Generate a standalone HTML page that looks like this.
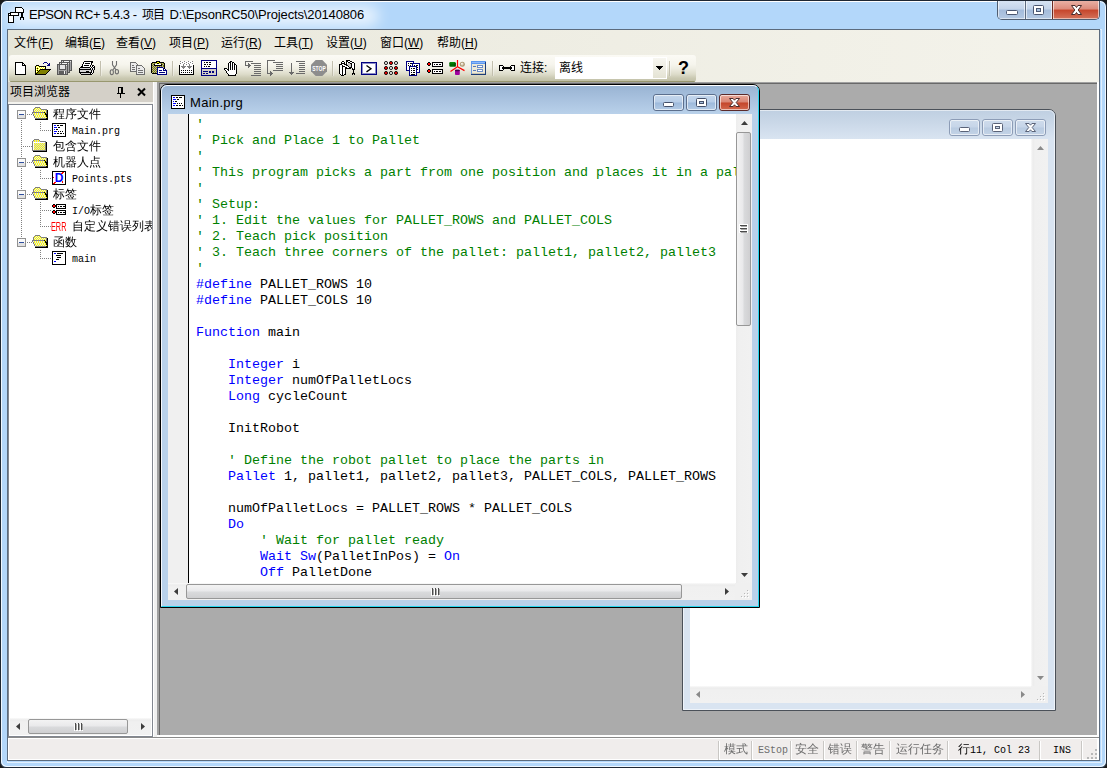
<!DOCTYPE html>
<html lang="zh-CN"><head><meta charset="utf-8"><title>EPSON RC+ 5.4.3</title>
<style>
html,body{margin:0;padding:0;}
body{width:1107px;height:768px;overflow:hidden;background:#1a1a1a;position:relative;font-family:"Liberation Sans","Noto Sans CJK SC",sans-serif;font-size:12px;color:#000;}
div,span,svg,pre{position:absolute;box-sizing:border-box;}
svg{overflow:visible;}
.px{shape-rendering:crispEdges;}
/* main frame */
#frame{left:0;top:0;width:1107px;height:768px;border:1px solid #1e2733;border-radius:7px 7px 6px 6px;background:#b3d7fa;overflow:hidden;}
#titlegrad{display:none;}
#titleglow{left:6px;top:5px;width:372px;height:20px;border-radius:10px;background:rgba(255,255,255,.7);filter:blur(7px);}
#frameinner{left:0;top:0;width:1105px;height:766px;border:1px solid rgba(255,255,255,.8);border-top-color:#fff;border-radius:6px;}
#frameinner2{left:6px;top:28px;width:1095px;height:734px;border:1px solid rgba(255,255,255,.6);}
#title{left:29px;top:7px;height:16px;line-height:16px;font-size:13px;white-space:nowrap;color:#000;letter-spacing:-.21px;}
#clientborder{left:7px;top:29px;width:1093px;height:732px;border:1px solid #5c6b7d;background:#fff;}
/* menu */
#menubar{left:8px;top:30px;width:1091px;height:52px;background:linear-gradient(90deg,#e6e6d9 0,#ecebe0 30%,#f4f3eb 100%);}
.mi{top:35px;height:16px;line-height:16px;font-size:12px;white-space:nowrap;}
.mi u{text-decoration:underline;text-underline-offset:1px;}
/* toolbar */
#toolbar{left:9px;top:55px;width:687px;height:27px;border-radius:3px;background:linear-gradient(180deg,#fbfaf5 0,#f6f5ed 35%,#eeede2 50%,#dddcca 71%,#c9c8b1 86%,#c2c1a8 96%,#c2c1a8 100%);}
#toolbarshadow{left:10px;top:81px;width:685px;height:1px;background:#98976f;border-radius:0 0 3px 3px;}
.sep{top:61px;width:1px;height:15px;background:#c2bfae;}
.sep i{position:absolute;left:1px;top:0;width:1px;height:15px;background:rgba(255,255,255,.35);}
.ic{top:60px;width:16px;height:16px;}
/* left panel */
#lp{left:8px;top:82px;width:145px;height:655px;background:#f4f3ee;}
#lphead{left:0;top:0;width:145px;height:20px;background:#d4d0c8;}
#lptitle{left:2px;top:2px;font-size:12px;line-height:16px;white-space:nowrap;}
#tree{left:0;top:22px;width:145px;height:633px;border:1px solid #828790;background:#fff;overflow:hidden;box-shadow:inset 0 0 0 1px #fff;}
.tl{margin-top:1px;font-family:"Liberation Mono","WenQuanYi Zen Hei","Noto Sans CJK SC",monospace;font-size:12px;line-height:16px;height:16px;white-space:nowrap;}
/* mdi */
#split{left:153px;top:82px;width:4px;height:655px;background:#f0f0f0;border-left:1px solid #fff;}
#mdiedge{left:157px;top:82px;width:942px;height:655px;background:#a0a0a0;border-right:2px solid #fff;border-bottom:2px solid #fff;}
#mdiedge2{left:159px;top:83px;width:938px;height:652px;background:#696969;}
#mdi{left:160px;top:84px;width:937px;height:651px;background:#ababab;overflow:hidden;}
/* status */
#status{left:8px;top:737px;width:1091px;height:22px;background:#f0edec;border-top:1px solid #8a8a8a;box-shadow:inset 0 1px 0 #fff,inset -2px 0 0 #fff,inset 1px 0 0 #fff;}
.ssep{top:3px;width:1px;height:19px;background:#c9c7c4;}
.ssep i{position:absolute;left:1px;top:0;width:1px;height:19px;background:#fff;}
.st{top:4px;height:16px;line-height:16px;font-size:12px;white-space:nowrap;font-family:"Liberation Mono","WenQuanYi Zen Hei","Noto Sans CJK SC",monospace;}
.st.dis{color:#6d6d6d;}
/* child windows */
.win{border-radius:7px 7px 0 0;}
.cbtn{border-radius:3px;}
#code{font-family:"Liberation Mono",monospace;font-size:13.333px;line-height:16px;white-space:pre;left:7px;top:3px;color:#000;margin:0;}
#code .c{font-weight:normal;color:#008000;}
#code .k{font-weight:normal;color:#0000ff;}
/* window 2 (inactive) */
#w2{left:522px;top:25px;width:374px;height:602px;border:1px solid #4b5159;border-radius:7px 7px 0 0;background:#d9e4f1;overflow:hidden;}
#w2 .tgrad{left:0;top:0;width:372px;height:29px;background:linear-gradient(180deg,#bfcfe1 0,#cad8e8 45%,#d9e4f1 100%);}
#w2 .hl{left:0;top:0;width:372px;height:600px;border:1px solid rgba(255,255,255,.55);border-radius:6px 6px 0 0;}
#w2 .client{left:7px;top:29px;width:358px;height:564px;background:#fff;}
.vsb{background:linear-gradient(90deg,#fafafa 0,#ececec 2px,#f0f0f0 4px,#f1f1f1 100%);width:17px;}
.hsb{background:linear-gradient(180deg,#fafafa 0,#ececec 2px,#f0f0f0 4px,#f1f1f1 100%);height:17px;}
.sbc{background:#f0f0f0;width:17px;height:17px;}
.cb{width:31px;height:17px;border:1px solid #7f8fa8;border-radius:3px;}
.cb i{position:absolute;left:0;top:0;right:0;bottom:0;border:1px solid rgba(255,255,255,.6);border-radius:2px;}
#w2 .cb{background:linear-gradient(180deg,#cfdcec 0,#c6d5e8 48%,#b9cbe1 52%,#c3d3e6 100%);border-color:#8c9cb6;}
/* window 1 (active) */
#w1{left:0;top:0;width:600px;height:524px;border:1px solid #000;border-radius:7px 7px 0 0;background:#b9d1ea;overflow:hidden;}
#w1 .tgrad{left:0;top:0;width:598px;height:29px;background:linear-gradient(180deg,#98b3d2 0,#a9c2df 50%,#b9d1ea 100%);}
#w1 .hl{left:0;top:0;width:598px;height:522px;border:1px solid #26d6ee;border-top-color:#fff;border-left-color:rgba(255,255,255,.85);border-radius:6px 6px 0 0;}
#w1 .client{left:7px;top:29px;width:584px;height:486px;background:#fff;overflow:hidden;}
#w1 .cb{background:linear-gradient(180deg,#c5d7ec 0,#b7cde8 48%,#9db9db 52%,#b4cbe6 100%);border-color:#5c6f8d;}
#w1 .cb.close{background:linear-gradient(180deg,#e9a99b 0,#d98472 48%,#c4452a 52%,#d2694f 100%);border-color:#5b2a2a;}
#w1 .wtitle{left:29px;top:10px;font-size:13px;letter-spacing:.3px;line-height:16px;white-space:nowrap;}
#margin{left:0;top:0;width:20px;height:469px;background:#f0f0f0;}
#mline{left:20px;top:0;width:1px;height:469px;background:#000;}
#codearea{left:21px;top:0;width:547px;height:469px;z-index:1;background:#fff;overflow:hidden;}
.thumbv{border:1px solid #979797;border-radius:2px;background:linear-gradient(90deg,#f3f3f3 0,#e9e9eb 45%,#d9dadc 55%,#cfcfd1 100%);}
.thumbh{border:1px solid #979797;border-radius:2px;background:linear-gradient(180deg,#f3f3f3 0,#e9e9eb 45%,#d9dadc 55%,#cfcfd1 100%);}
#connlbl{left:520px;top:60px;font-size:12px;line-height:16px;white-space:nowrap;}
#combo{left:555px;top:57px;width:112px;height:22px;background:#fff;}
#combotext{left:4px;top:3px;font-size:12px;line-height:16px;white-space:nowrap;}
#combobtn{left:98px;top:1px;width:13px;height:20px;background:linear-gradient(180deg,#f7f6f0 0,#e4e3d4 100%);}
#help{left:677px;top:57px;width:13px;height:22px;line-height:22px;font-size:18px;font-weight:bold;text-align:center;font-family:"Liberation Sans",sans-serif;}
.vd{width:1px;background:repeating-linear-gradient(180deg,#808080 0,#808080 1px,transparent 1px,transparent 2px);}
.hd{height:1px;background:repeating-linear-gradient(90deg,#808080 0,#808080 1px,transparent 1px,transparent 2px);}
.err{font-family:"Liberation Sans",sans-serif;font-size:13.500px;line-height:16px;margin-top:1px;color:#f00;transform:scaleX(.54);transform-origin:0 0;white-space:nowrap;}
.la{position:relative;font-size:10px;letter-spacing:0;}
#capbtns{left:997px;top:1px;width:103px;height:19px;border:1px solid #4f5d70;border-top:none;border-radius:0 0 5px 5px;overflow:hidden;}
.mb{top:0;height:18px;border-left:1px solid #5c6b80;background:linear-gradient(180deg,#d6e3f3 0,#c3d4ea 45%,#a4bcdb 50%,#b4c9e3 100%);box-shadow:inset 1px 0 0 rgba(255,255,255,.6),inset -1px 0 0 rgba(255,255,255,.6),inset 0 -1px 0 rgba(255,255,255,.5);}
.mb:first-child{border-left:none;}
.mclose{background:linear-gradient(180deg,#e9b0a4 0,#dc8b7b 45%,#c6452b 50%,#d4735b 100%);border-left-color:#6b2a22;}

</style></head>
<body>
<div id="frame">
  <div id="titlegrad"></div>
  <div id="titleglow"></div>
  <div id="frameinner"></div><div id="frameinner2"></div>
</div>
<div id="capbtns"><div class="mb" style="left:0;width:27px"><svg style="left:8px;top:9px" width="12" height="5" viewBox="0 0 12 5"><rect x=".5" y=".5" width="11" height="4" rx="1" fill="#fff" stroke="#4a5670"/></svg></div><div class="mb" style="left:27px;width:27px"><svg style="left:7px;top:4px" width="11" height="10" viewBox="0 0 11 10"><rect x=".5" y=".5" width="10" height="9" rx="1" fill="#fff" stroke="#4a5670"/><rect x="3.500" y="3.500" width="4" height="3" fill="#a9c1de" stroke="#4a5670"/></svg></div><div class="mb mclose" style="left:54px;width:47px"><svg style="left:18px;top:4px" width="11" height="10" viewBox="0 0 11 10"><path d="M.5 .5h3.600l1.400 2 1.400-2h3.600l-3.300 4.500 3.300 4.500h-3.600l-1.400-2-1.400 2h-3.600l3.300-4.500z" fill="#fff" stroke="#4a2c2c" stroke-linejoin="round"/></svg></div></div>
<svg class="px" style="left:8px;top:7px" width="16" height="16" viewBox="0 0 16 16"><path fill="#000" d="M7 0h7v1h-7zM7 1h1v1h-1zM14 1h1v1h-1zM7 2h1v1h-1zM15 2h1v1h-1zM7 3h1v1h-1zM15 3h1v1h-1zM7 4h1v1h-1zM15 4h1v1h-1zM2 5h14v1h-14zM0 6h3v1h-3zM10 6h1v1h-1zM13 6h2v1h-2zM0 7h1v1h-1zM2 7h1v1h-1zM10 7h1v1h-1zM13 7h2v1h-2zM0 8h11v1h-11zM13 8h2v1h-2zM0 9h1v1h-1zM5 9h1v1h-1zM13 9h2v1h-2zM0 10h1v1h-1zM5 10h1v1h-1zM12 10h4v1h-4zM0 11h1v1h-1zM5 11h1v1h-1zM12 11h1v1h-1zM15 11h1v1h-1zM0 12h1v1h-1zM5 12h1v1h-1zM12 12h1v1h-1zM15 12h1v1h-1zM0 13h1v1h-1zM5 13h1v1h-1zM0 14h1v1h-1zM5 14h1v1h-1zM0 15h6v1h-6z"/><path fill="#fff" d="M8 1h6v1h-6zM8 2h7v1h-7zM8 3h7v1h-7zM8 4h7v1h-7zM3 6h7v1h-7zM1 7h1v1h-1zM3 7h7v1h-7zM1 9h4v1h-4zM1 10h4v1h-4zM1 11h4v1h-4zM1 12h4v1h-4zM1 13h4v1h-4zM1 14h4v1h-4z"/></svg>
<div id="title"><span style="left:0;letter-spacing:-.5px">EPSON RC+ 5.4.3 -</span><span style="left:113px;font-size:12px;letter-spacing:-.9px">项目</span><span style="left:140.500px;letter-spacing:-.14px">D:\EpsonRC50\Projects\20140806</span></div>
<div id="clientborder"></div>
<div id="menubar"></div>
<div class="mi" style="left:14px">文件(<u>F</u>)</div>
<div class="mi" style="left:65px">编辑(<u>E</u>)</div>
<div class="mi" style="left:116px">查看(<u>V</u>)</div>
<div class="mi" style="left:169px">项目(<u>P</u>)</div>
<div class="mi" style="left:221px">运行(<u>R</u>)</div>
<div class="mi" style="left:274px">工具(<u>T</u>)</div>
<div class="mi" style="left:326px">设置(<u>U</u>)</div>
<div class="mi" style="left:380px">窗口(<u>W</u>)</div>
<div class="mi" style="left:437px">帮助(<u>H</u>)</div>
<div id="toolbar"></div>
<div id="toolbarshadow"></div>
<svg class="ic px" style="left:13px" viewBox="0 0 16 16"><path d="M2.500 2.500h7l3 3v9h-10z" fill="#fff" stroke="#000"/><path d="M9.500 2.500v3h3" fill="none" stroke="#000"/></svg><svg class="ic px" style="left:35px" width="16" height="16" viewBox="0 0 16 16"><path fill="#000080" d="M9 2h3v1h-3zM8 3h1v1h-1zM12 3h1v1h-1zM14 3h1v1h-1zM13 4h2v1h-2zM12 5h3v1h-3z"/><path fill="#000" d="M1 5h3v1h-3zM0 6h1v1h-1zM4 6h7v1h-7zM0 7h1v1h-1zM10 7h1v1h-1zM0 8h1v1h-1zM2 8h1v1h-1zM10 8h1v1h-1zM0 9h1v1h-1zM5 9h11v1h-11zM0 10h1v1h-1zM2 10h1v1h-1zM4 10h1v1h-1zM14 10h1v1h-1zM0 11h1v1h-1zM3 11h1v1h-1zM13 11h1v1h-1zM0 12h1v1h-1zM2 12h1v1h-1zM12 12h1v1h-1zM0 13h2v1h-2zM11 13h1v1h-1zM0 14h11v1h-11z"/><path fill="#ffff00" d="M1 6h1v1h-1zM3 6h1v1h-1zM2 7h1v1h-1zM4 7h1v1h-1zM6 7h1v1h-1zM8 7h1v1h-1zM1 8h1v1h-1zM3 8h1v1h-1zM5 8h1v1h-1zM7 8h1v1h-1zM9 8h1v1h-1zM2 9h1v1h-1zM4 9h1v1h-1zM1 10h1v1h-1zM3 10h1v1h-1zM2 11h1v1h-1zM1 12h1v1h-1z"/><path fill="#fff" d="M2 6h1v1h-1zM1 7h1v1h-1zM3 7h1v1h-1zM5 7h1v1h-1zM7 7h1v1h-1zM9 7h1v1h-1zM4 8h1v1h-1zM6 8h1v1h-1zM8 8h1v1h-1zM1 9h1v1h-1zM3 9h1v1h-1zM1 11h1v1h-1z"/><path fill="#808000" d="M5 10h9v1h-9zM4 11h9v1h-9zM3 12h9v1h-9zM2 13h9v1h-9z"/></svg><svg class="ic px" style="left:57px" width="16" height="16" viewBox="0 0 16 16"><path fill="#585858" d="M4 0h11v1h-11zM4 1h1v1h-1zM6 1h1v1h-1zM12 1h1v1h-1zM14 1h1v1h-1zM2 2h11v1h-11zM14 2h1v1h-1zM2 3h1v1h-1zM4 3h1v1h-1zM10 3h1v1h-1zM12 3h1v1h-1zM14 3h1v1h-1zM0 4h11v1h-11zM12 4h1v1h-1zM14 4h1v1h-1zM0 5h1v1h-1zM2 5h1v1h-1zM8 5h1v1h-1zM10 5h1v1h-1zM12 5h1v1h-1zM14 5h1v1h-1zM0 6h1v1h-1zM2 6h1v1h-1zM8 6h1v1h-1zM10 6h1v1h-1zM12 6h1v1h-1zM14 6h1v1h-1zM0 7h1v1h-1zM2 7h1v1h-1zM8 7h1v1h-1zM10 7h1v1h-1zM12 7h1v1h-1zM14 7h1v1h-1zM0 8h1v1h-1zM2 8h1v1h-1zM8 8h1v1h-1zM10 8h1v1h-1zM12 8h1v1h-1zM14 8h1v1h-1zM0 9h1v1h-1zM2 9h7v1h-7zM10 9h1v1h-1zM12 9h1v1h-1zM14 9h1v1h-1zM0 10h1v1h-1zM10 10h1v1h-1zM12 10h3v1h-3zM0 11h1v1h-1zM2 11h1v1h-1zM8 11h1v1h-1zM10 11h1v1h-1zM12 11h1v1h-1zM0 12h1v1h-1zM2 12h1v1h-1zM8 12h1v1h-1zM10 12h3v1h-3zM0 13h1v1h-1zM2 13h1v1h-1zM8 13h1v1h-1zM10 13h1v1h-1zM0 14h11v1h-11z"/><path fill="#e0e0e0" d="M5 1h1v1h-1zM13 1h1v1h-1zM3 3h1v1h-1zM11 3h1v1h-1zM9 5h1v1h-1z"/><path fill="#f4f4f4" d="M7 1h5v1h-5zM5 3h5v1h-5zM7 11h1v1h-1zM7 12h1v1h-1zM7 13h1v1h-1z"/><path fill="#a4a4a4" d="M13 2h1v1h-1zM13 3h1v1h-1zM11 4h1v1h-1zM13 4h1v1h-1zM1 5h1v1h-1zM11 5h1v1h-1zM13 5h1v1h-1zM1 6h1v1h-1zM9 6h1v1h-1zM11 6h1v1h-1zM13 6h1v1h-1zM1 7h1v1h-1zM9 7h1v1h-1zM11 7h1v1h-1zM13 7h1v1h-1zM1 8h1v1h-1zM9 8h1v1h-1zM11 8h1v1h-1zM13 8h1v1h-1zM1 9h1v1h-1zM9 9h1v1h-1zM11 9h1v1h-1zM13 9h1v1h-1zM1 10h9v1h-9zM11 10h1v1h-1zM1 11h1v1h-1zM9 11h1v1h-1zM11 11h1v1h-1zM1 12h1v1h-1zM9 12h1v1h-1zM1 13h1v1h-1zM9 13h1v1h-1z"/><path fill="#e6e6e6" d="M3 5h5v1h-5zM3 6h5v1h-5zM3 7h5v1h-5zM3 8h5v1h-5z"/><path fill="#5e5e5e" d="M3 11h4v1h-4zM3 12h4v1h-4zM3 13h4v1h-4z"/></svg><svg class="ic px" style="left:79px" width="16" height="16" viewBox="0 0 16 16"><path fill="#000" d="M5 1h9v1h-9zM4 2h1v1h-1zM12 2h2v1h-2zM4 3h1v1h-1zM6 3h5v1h-5zM12 3h1v1h-1zM3 4h1v1h-1zM12 4h1v1h-1zM3 5h1v1h-1zM5 5h5v1h-5zM11 5h1v1h-1zM13 5h2v1h-2zM2 6h2v1h-2zM11 6h1v1h-1zM13 6h1v1h-1zM15 6h1v1h-1zM1 7h10v1h-10zM12 7h1v1h-1zM14 7h2v1h-2zM0 8h1v1h-1zM11 8h1v1h-1zM13 8h1v1h-1zM15 8h1v1h-1zM0 9h12v1h-12zM13 9h1v1h-1zM15 9h1v1h-1zM0 10h1v1h-1zM12 10h1v1h-1zM14 10h1v1h-1zM0 11h1v1h-1zM7 11h3v1h-3zM12 11h1v1h-1zM14 11h1v1h-1zM0 12h13v1h-13zM14 12h1v1h-1zM1 13h1v1h-1zM11 13h1v1h-1zM13 13h1v1h-1zM2 14h11v1h-11z"/><path fill="#fff" d="M5 2h7v1h-7zM5 3h1v1h-1zM11 3h1v1h-1zM4 4h8v1h-8zM4 5h1v1h-1zM10 5h1v1h-1zM4 6h7v1h-7zM12 6h1v1h-1zM14 6h1v1h-1zM11 7h1v1h-1zM13 7h1v1h-1zM12 8h1v1h-1zM14 8h1v1h-1zM13 11h1v1h-1zM13 12h1v1h-1zM12 13h1v1h-1z"/><path fill="#d4d4d4" d="M1 8h10v1h-10zM12 9h1v1h-1zM14 9h1v1h-1zM1 10h11v1h-11zM13 10h1v1h-1zM1 11h6v1h-6zM10 11h2v1h-2zM2 13h9v1h-9z"/></svg>
<div class="sep" style="left:100px"><i></i></div>
<svg class="ic" style="left:107px" viewBox="0 0 16 16" fill="none" stroke="#6e6e6e" stroke-width="1.100"><path d="M5.500 1v3.800l3.600 5.200M9.500 1v3.800l-3.600 5.200"/><ellipse cx="4.800" cy="12.200" rx="1.600" ry="2.400"/><ellipse cx="9.900" cy="11.700" rx="1.600" ry="2.200"/></svg><svg class="ic px" style="left:129px" viewBox="0 0 16 16"><g fill="#ebebeb" stroke="#6e6e6e"><path d="M1.500 2.500h5l2 2v7h-7z"/><path d="M7.500 5.500h5l3 3v6h-8z"/></g><path d="M3 5h2M3 7h3M3 9h3M9 8h2M9 10h5M9 12h5" stroke="#6e6e6e" transform="translate(0,.5)"/></svg><svg class="ic px" style="left:151px" width="16" height="16" viewBox="0 0 16 16"><path fill="#000" d="M5 1h4v1h-4zM1 2h5v1h-5zM8 2h5v1h-5zM0 3h1v1h-1zM6 3h2v1h-2zM13 3h1v1h-1zM0 4h1v1h-1zM3 4h1v1h-1zM10 4h1v1h-1zM13 4h1v1h-1zM0 5h1v1h-1zM3 5h8v1h-8zM13 5h1v1h-1zM0 6h1v1h-1zM13 6h1v1h-1zM0 7h1v1h-1zM13 7h1v1h-1zM0 8h1v1h-1zM13 8h1v1h-1zM0 9h1v1h-1zM0 10h1v1h-1zM0 11h1v1h-1zM0 12h1v1h-1zM1 13h5v1h-5z"/><path fill="#ffff00" d="M6 2h2v1h-2zM5 3h1v1h-1zM8 3h1v1h-1z"/><path fill="#808000" d="M1 3h1v1h-1zM3 3h1v1h-1zM10 3h1v1h-1zM12 3h1v1h-1zM2 4h1v1h-1zM11 4h1v1h-1zM1 5h1v1h-1zM12 5h1v1h-1zM2 6h1v1h-1zM4 6h1v1h-1zM6 6h1v1h-1zM8 6h1v1h-1zM10 6h1v1h-1zM12 6h1v1h-1zM1 7h1v1h-1zM3 7h1v1h-1zM5 7h1v1h-1zM2 8h1v1h-1zM4 8h1v1h-1zM1 9h1v1h-1zM3 9h1v1h-1zM5 9h1v1h-1zM2 10h1v1h-1zM4 10h1v1h-1zM1 11h1v1h-1zM3 11h1v1h-1zM5 11h1v1h-1zM2 12h1v1h-1zM4 12h1v1h-1z"/><path fill="#b0b0a0" d="M2 3h1v1h-1zM4 3h1v1h-1zM9 3h1v1h-1zM11 3h1v1h-1zM1 4h1v1h-1zM12 4h1v1h-1zM2 5h1v1h-1zM11 5h1v1h-1zM1 6h1v1h-1zM3 6h1v1h-1zM5 6h1v1h-1zM7 6h1v1h-1zM9 6h1v1h-1zM11 6h1v1h-1zM2 7h1v1h-1zM4 7h1v1h-1zM12 7h1v1h-1zM1 8h1v1h-1zM3 8h1v1h-1zM5 8h1v1h-1zM2 9h1v1h-1zM4 9h1v1h-1zM1 10h1v1h-1zM3 10h1v1h-1zM5 10h1v1h-1zM2 11h1v1h-1zM4 11h1v1h-1zM1 12h1v1h-1zM3 12h1v1h-1zM5 12h1v1h-1z"/><path fill="#fff" d="M4 4h6v1h-6zM7 8h5v1h-5zM7 9h5v1h-5zM13 9h1v1h-1zM7 10h1v1h-1zM11 10h1v1h-1zM7 11h8v1h-8zM7 12h1v1h-1zM14 12h1v1h-1zM7 13h8v1h-8z"/><path fill="#000080" d="M6 7h6v1h-6zM6 8h1v1h-1zM12 8h1v1h-1zM6 9h1v1h-1zM12 9h1v1h-1zM14 9h1v1h-1zM6 10h1v1h-1zM8 10h3v1h-3zM12 10h4v1h-4zM6 11h1v1h-1zM15 11h1v1h-1zM6 12h1v1h-1zM8 12h6v1h-6zM15 12h1v1h-1zM6 13h1v1h-1zM15 13h1v1h-1zM6 14h10v1h-10z"/></svg>
<div class="sep" style="left:172px"><i></i></div>
<svg class="ic px" style="left:179px" width="16" height="16" viewBox="0 0 16 16"><path fill="#808080" d="M1 1h1v1h-1zM5 1h1v1h-1zM9 1h1v1h-1zM13 1h1v1h-1zM3 2h1v1h-1zM7 2h1v1h-1zM11 2h1v1h-1zM1 3h1v1h-1zM5 3h1v1h-1zM9 3h1v1h-1zM13 3h1v1h-1zM4 4h1v1h-1zM7 4h1v1h-1zM10 4h1v1h-1zM4 5h1v1h-1zM10 5h1v1h-1zM2 6h5v1h-5zM8 6h5v1h-5zM3 7h3v1h-3zM9 7h3v1h-3zM4 8h1v1h-1zM10 8h1v1h-1z"/><path fill="#fff" d="M2 1h3v1h-3zM6 1h3v1h-3zM10 1h3v1h-3zM1 2h2v1h-2zM4 2h3v1h-3zM8 2h3v1h-3zM12 2h2v1h-2zM2 3h3v1h-3zM6 3h3v1h-3zM10 3h3v1h-3zM1 4h3v1h-3zM5 4h2v1h-2zM8 4h2v1h-2zM11 4h3v1h-3zM1 5h3v1h-3zM5 5h5v1h-5zM11 5h3v1h-3zM1 6h1v1h-1zM7 6h1v1h-1zM13 6h1v1h-1zM1 7h2v1h-2zM6 7h3v1h-3zM12 7h2v1h-2zM1 8h3v1h-3zM5 8h5v1h-5zM11 8h3v1h-3zM1 9h13v1h-13zM1 10h1v1h-1zM3 10h1v1h-1zM5 10h1v1h-1zM7 10h1v1h-1zM9 10h1v1h-1zM11 10h1v1h-1zM13 10h1v1h-1zM1 11h13v1h-13zM1 12h1v1h-1zM3 12h1v1h-1zM5 12h1v1h-1zM7 12h1v1h-1zM9 12h1v1h-1zM11 12h1v1h-1zM13 12h1v1h-1zM1 13h13v1h-13z"/><path fill="#000" d="M0 5h1v1h-1zM14 5h1v1h-1zM0 6h1v1h-1zM14 6h1v1h-1zM0 7h1v1h-1zM14 7h1v1h-1zM0 8h1v1h-1zM14 8h1v1h-1zM0 9h1v1h-1zM14 9h1v1h-1zM0 10h1v1h-1zM2 10h1v1h-1zM4 10h1v1h-1zM6 10h1v1h-1zM8 10h1v1h-1zM10 10h1v1h-1zM12 10h1v1h-1zM14 10h1v1h-1zM0 11h1v1h-1zM14 11h1v1h-1zM0 12h1v1h-1zM2 12h1v1h-1zM4 12h1v1h-1zM6 12h1v1h-1zM8 12h1v1h-1zM10 12h1v1h-1zM12 12h1v1h-1zM14 12h1v1h-1zM0 13h1v1h-1zM14 13h1v1h-1zM0 14h15v1h-15z"/></svg><svg class="ic px" style="left:201px" width="16" height="16" viewBox="0 0 16 16"><path fill="#000080" d="M0 0h16v1h-16zM0 1h1v1h-1zM15 1h1v1h-1zM0 2h1v1h-1zM15 2h1v1h-1zM0 3h1v1h-1zM15 3h1v1h-1zM0 4h1v1h-1zM15 4h1v1h-1zM0 5h1v1h-1zM15 5h1v1h-1zM0 6h1v1h-1zM15 6h1v1h-1zM0 7h1v1h-1zM15 7h1v1h-1zM0 8h16v1h-16zM0 9h1v1h-1zM15 9h1v1h-1zM0 10h1v1h-1zM15 10h1v1h-1zM0 11h1v1h-1zM2 11h5v1h-5zM8 11h2v1h-2zM11 11h2v1h-2zM15 11h1v1h-1zM0 12h1v1h-1zM8 12h2v1h-2zM11 12h2v1h-2zM15 12h1v1h-1zM0 13h1v1h-1zM2 13h2v1h-2zM5 13h2v1h-2zM15 13h1v1h-1zM0 14h1v1h-1zM15 14h1v1h-1zM0 15h16v1h-16z"/><path fill="#fff" d="M1 1h14v1h-14zM1 2h2v1h-2zM4 2h1v1h-1zM7 2h1v1h-1zM10 2h5v1h-5zM1 3h14v1h-14zM1 4h2v1h-2zM5 4h1v1h-1zM7 4h1v1h-1zM10 4h5v1h-5zM1 5h14v1h-14zM1 6h2v1h-2zM4 6h1v1h-1zM6 6h1v1h-1zM9 6h6v1h-6zM1 7h14v1h-14z"/><path fill="#000" d="M3 2h1v1h-1zM5 2h2v1h-2zM8 2h2v1h-2zM3 4h2v1h-2zM6 4h1v1h-1zM8 4h2v1h-2zM3 6h1v1h-1zM5 6h1v1h-1zM7 6h2v1h-2z"/><path fill="#d4d0c8" d="M1 9h14v1h-14zM1 10h14v1h-14zM1 11h1v1h-1zM7 11h1v1h-1zM10 11h1v1h-1zM13 11h2v1h-2zM1 12h7v1h-7zM10 12h1v1h-1zM13 12h2v1h-2zM1 13h1v1h-1zM4 13h1v1h-1zM7 13h8v1h-8zM1 14h14v1h-14z"/></svg><svg class="ic px" style="left:223px" width="16" height="16" viewBox="0 0 16 16"><path fill="#000" d="M7 1h2v1h-2zM6 2h2v1h-2zM9 2h2v1h-2zM5 3h1v1h-1zM7 3h1v1h-1zM9 3h1v1h-1zM11 3h1v1h-1zM5 4h1v1h-1zM7 4h1v1h-1zM9 4h1v1h-1zM11 4h2v1h-2zM5 5h1v1h-1zM7 5h1v1h-1zM9 5h1v1h-1zM11 5h1v1h-1zM13 5h1v1h-1zM5 6h1v1h-1zM7 6h1v1h-1zM9 6h1v1h-1zM11 6h1v1h-1zM13 6h1v1h-1zM5 7h1v1h-1zM7 7h1v1h-1zM9 7h1v1h-1zM11 7h1v1h-1zM13 7h1v1h-1zM1 8h3v1h-3zM5 8h1v1h-1zM7 8h1v1h-1zM9 8h1v1h-1zM11 8h1v1h-1zM13 8h1v1h-1zM1 9h1v1h-1zM4 9h2v1h-2zM7 9h1v1h-1zM9 9h1v1h-1zM11 9h1v1h-1zM13 9h1v1h-1zM2 10h1v1h-1zM5 10h1v1h-1zM13 10h1v1h-1zM3 11h1v1h-1zM13 11h1v1h-1zM3 12h1v1h-1zM13 12h1v1h-1zM4 13h1v1h-1zM13 13h1v1h-1zM5 14h1v1h-1zM12 14h1v1h-1zM5 15h8v1h-8z"/><path fill="#fff" d="M8 2h1v1h-1zM6 3h1v1h-1zM8 3h1v1h-1zM10 3h1v1h-1zM6 4h1v1h-1zM8 4h1v1h-1zM10 4h1v1h-1zM6 5h1v1h-1zM8 5h1v1h-1zM10 5h1v1h-1zM12 5h1v1h-1zM6 6h1v1h-1zM8 6h1v1h-1zM10 6h1v1h-1zM12 6h1v1h-1zM6 7h1v1h-1zM8 7h1v1h-1zM10 7h1v1h-1zM12 7h1v1h-1zM6 8h1v1h-1zM8 8h1v1h-1zM10 8h1v1h-1zM12 8h1v1h-1zM2 9h2v1h-2zM6 9h1v1h-1zM8 9h1v1h-1zM10 9h1v1h-1zM12 9h1v1h-1zM3 10h2v1h-2zM6 10h7v1h-7zM4 11h9v1h-9zM4 12h9v1h-9zM5 13h8v1h-8zM6 14h6v1h-6z"/></svg><svg class="ic px" style="left:245px" width="16" height="16" viewBox="0 0 16 16"><path fill="#6a6a6a" d="M0 1h8v1h-8zM0 2h1v1h-1zM0 3h1v1h-1zM3 3h1v1h-1zM6 3h10v1h-10zM0 4h1v1h-1zM3 4h2v1h-2zM0 5h6v1h-6zM9 5h7v1h-7zM3 6h2v1h-2zM3 7h1v1h-1zM9 7h7v1h-7zM9 9h7v1h-7zM9 11h7v1h-7zM9 13h7v1h-7zM6 15h10v1h-10z"/></svg><svg class="ic px" style="left:267px" width="16" height="16" viewBox="0 0 16 16"><path fill="#6a6a6a" d="M0 0h8v1h-8zM0 1h1v1h-1zM0 2h1v1h-1zM6 2h10v1h-10zM0 3h1v1h-1zM0 4h1v1h-1zM9 4h7v1h-7zM0 5h1v1h-1zM0 6h1v1h-1zM9 6h7v1h-7zM0 7h1v1h-1zM0 8h1v1h-1zM9 8h7v1h-7zM0 9h1v1h-1zM0 10h1v1h-1zM6 10h10v1h-10zM0 11h1v1h-1zM3 11h1v1h-1zM0 12h1v1h-1zM3 12h2v1h-2zM0 13h6v1h-6zM3 14h2v1h-2zM3 15h1v1h-1z"/></svg><svg class="ic px" style="left:289px" width="16" height="16" viewBox="0 0 16 16"><path fill="#6a6a6a" d="M7 1h9v1h-9zM2 3h1v1h-1zM10 3h6v1h-6zM2 4h1v1h-1zM2 5h1v1h-1zM10 5h6v1h-6zM2 6h1v1h-1zM2 7h1v1h-1zM10 7h6v1h-6zM2 8h1v1h-1zM2 9h1v1h-1zM10 9h6v1h-6zM2 10h1v1h-1zM2 11h1v1h-1zM10 11h6v1h-6zM0 12h5v1h-5zM1 13h3v1h-3zM7 13h9v1h-9zM2 14h1v1h-1z"/></svg><svg class="ic" style="left:311px" viewBox="0 0 16 16"><path d="M4.700 0h6.600L16 4.700v6.600L11.300 16H4.700L0 11.300V4.700z" fill="#8d8d8d"/><text x="8" y="10.600" text-anchor="middle" font-family="Liberation Sans,sans-serif" font-weight="bold" font-size="7" fill="#fff" textLength="13.500" lengthAdjust="spacingAndGlyphs">STOP</text></svg>
<div class="sep" style="left:332px"><i></i></div>
<svg class="ic px" style="left:339px" width="16" height="16" viewBox="0 0 16 16"><path fill="#000" d="M7 0h4v1h-4zM3 1h2v1h-2zM7 1h2v1h-2zM11 1h2v1h-2zM2 2h1v1h-1zM5 2h1v1h-1zM7 2h1v1h-1zM9 2h2v1h-2zM13 2h2v1h-2zM2 3h4v1h-4zM7 3h1v1h-1zM11 3h2v1h-2zM15 3h1v1h-1zM0 4h3v1h-3zM5 4h3v1h-3zM12 4h1v1h-1zM15 4h1v1h-1zM0 5h1v1h-1zM3 5h1v1h-1zM7 5h2v1h-2zM12 5h1v1h-1zM15 5h1v1h-1zM0 6h1v1h-1zM3 6h3v1h-3zM9 6h1v1h-1zM12 6h1v1h-1zM15 6h1v1h-1zM0 7h1v1h-1zM3 7h1v1h-1zM6 7h2v1h-2zM10 7h3v1h-3zM15 7h1v1h-1zM0 8h1v1h-1zM3 8h1v1h-1zM6 8h6v1h-6zM13 8h1v1h-1zM15 8h1v1h-1zM0 9h1v1h-1zM3 9h1v1h-1zM6 9h1v1h-1zM13 9h3v1h-3zM0 10h1v1h-1zM3 10h1v1h-1zM6 10h1v1h-1zM14 10h1v1h-1zM0 11h1v1h-1zM3 11h1v1h-1zM6 11h1v1h-1zM14 11h1v1h-1zM0 12h1v1h-1zM3 12h1v1h-1zM6 12h1v1h-1zM14 12h1v1h-1zM0 13h1v1h-1zM3 13h1v1h-1zM6 13h1v1h-1zM13 13h3v1h-3zM1 14h1v1h-1zM3 14h1v1h-1zM5 14h2v1h-2zM13 14h1v1h-1zM15 14h1v1h-1zM2 15h3v1h-3z"/><path fill="#fff" d="M9 1h2v1h-2zM3 2h2v1h-2zM8 2h1v1h-1zM11 2h2v1h-2zM8 3h1v1h-1zM13 3h2v1h-2zM3 4h2v1h-2zM13 4h2v1h-2zM1 5h2v1h-2zM4 5h3v1h-3zM13 5h2v1h-2zM1 6h2v1h-2zM6 6h3v1h-3zM13 6h2v1h-2zM1 7h2v1h-2zM4 7h2v1h-2zM8 7h2v1h-2zM13 7h2v1h-2zM1 8h2v1h-2zM4 8h2v1h-2zM14 8h1v1h-1zM1 9h2v1h-2zM4 9h2v1h-2zM1 10h2v1h-2zM4 10h2v1h-2zM1 11h2v1h-2zM4 11h2v1h-2zM1 12h2v1h-2zM4 12h2v1h-2zM1 13h2v1h-2zM4 13h2v1h-2zM2 14h1v1h-1zM4 14h1v1h-1z"/><path fill="#c8c8c8" d="M9 3h2v1h-2zM8 4h4v1h-4zM9 5h3v1h-3zM10 6h2v1h-2z"/></svg><svg class="ic px" style="left:361px" viewBox="0 0 16 16"><rect x=".5" y="2.500" width="15" height="12" fill="#fff" stroke="#000080" stroke-width="1"/><rect x="1.500" y="3.500" width="13" height="10" fill="none" stroke="#000080" stroke-width="1" opacity=".45"/><path d="M5.500 5.500l4.500 3.200-4.500 3.200" fill="none" stroke="#000" stroke-width="1.300" shape-rendering="auto"/></svg><svg class="ic" style="left:383px" viewBox="0 0 16 16"><g fill="#fff" stroke="#000" stroke-width=".9"><circle cx="3" cy="3" r="1.550"/><circle cx="8" cy="8" r="1.550"/><circle cx="13" cy="3" r="1.550"/><circle cx="8" cy="13" r="1.550"/></g><g fill="#f00" stroke="#000" stroke-width=".9"><circle cx="8" cy="3" r="1.550"/><circle cx="3" cy="8" r="1.550"/><circle cx="13" cy="8" r="1.550"/><circle cx="3" cy="13" r="1.550"/><circle cx="13" cy="13" r="1.550"/></g></svg><svg class="ic px" style="left:405px" viewBox="0 0 16 16"><g fill="#fff" stroke="#000080"><rect x="1.500" y="1.500" width="7" height="9"/><rect x="7.500" y="3.500" width="7" height="9"/><rect x="4.500" y="6.500" width="7" height="9"/></g><path d="M3 3h1M5 3h2M3 5h1M5 5h1M9 5h1M11 5h2M12 7h1M12 9h1M6 8h1M8 8h2M6 10h1M8 10h2M6 12h1M8 12h2M6 14h4" stroke="#000" transform="translate(0,.5)"/></svg><svg class="ic px" style="left:427px" viewBox="0 0 16 16"><g fill="#000"><rect x="1" y="2" width="2" height="4"/><rect x="0" y="3" width="4" height="2"/><rect x="1" y="9" width="2" height="4"/><rect x="0" y="10" width="4" height="2"/></g><g fill="#f00"><rect x="1" y="3" width="2" height="2"/><rect x="1" y="10" width="2" height="2"/></g><rect x="5" y="2" width="10" height="4" fill="#fff" stroke="#000" stroke-width="1" transform="translate(.5,.5)"/><rect x="5" y="9" width="10" height="4" fill="#fff" stroke="#000" stroke-width="1" transform="translate(.5,.5)"/><path d="M7 4h1M9 4h2M12 4h2M7 11h1M9 11h2M12 11h2" stroke="#000" transform="translate(0,.5)"/></svg><svg class="ic" style="left:449px" viewBox="0 0 16 16"><path d="M8.500 0v6.800L1.500 11.500M8.500 6.800l7 3.800" fill="none" stroke="#f00" stroke-width="1.200"/><rect x=".3" y="2" width="6.400" height="4.800" rx="1.300" fill="#006a00"/><rect x=".8" y="2" width="5.400" height="1.600" rx=".8" fill="#0a8a0a"/><rect x="5.500" y="3" width="1.200" height="3.500" rx=".5" fill="#004800"/><circle cx="13.300" cy="4.300" r="2.500" fill="#a89470"/><circle cx="13.100" cy="3.900" r="1.500" fill="#e4d8c0"/><circle cx="12.900" cy="3.600" r=".7" fill="#fff"/><rect x="6" y="9.800" width="4.800" height="5.200" rx=".9" fill="#a000a0"/><rect x="6" y="9.800" width="4.800" height="1.500" rx=".7" fill="#4a004a"/></svg><svg class="ic px" style="left:471px" viewBox="0 0 16 16"><rect x="0" y="1" width="15" height="14" fill="#ece9d8"/><rect x="0" y="1" width="15" height="3" fill="#5a96ee"/><rect x="1" y="2" width="13" height="1" fill="#8cb8fa"/><rect x="0" y="4" width="1" height="11" fill="#6e9ade"/><rect x="14" y="2" width="1" height="13" fill="#1c3c78"/><rect x="0" y="14" width="15" height="1" fill="#1c3c78"/><rect x="1" y="13" width="13" height="1" fill="#c8c4b0"/><rect x="6.500" y="5.500" width="5" height="2" fill="#fff" stroke="#6a8cc8"/><rect x="6.500" y="9.500" width="5" height="2" fill="#fff" stroke="#6a8cc8"/><path d="M2 6h3M2 10h3" stroke="#5878b8" transform="translate(0,.5)"/></svg>
<div class="sep" style="left:492px"><i></i></div>
<svg class="ic px" style="left:499px" width="16" height="16" viewBox="0 0 16 16"><path fill="#000" d="M0 5h4v1h-4zM12 5h4v1h-4zM0 6h1v1h-1zM4 6h1v1h-1zM11 6h1v1h-1zM15 6h1v1h-1zM0 7h1v1h-1zM3 7h10v1h-10zM15 7h1v1h-1zM0 8h1v1h-1zM3 8h10v1h-10zM15 8h1v1h-1zM0 9h1v1h-1zM4 9h1v1h-1zM11 9h1v1h-1zM15 9h1v1h-1zM0 10h4v1h-4zM12 10h4v1h-4z"/><path fill="#fff" d="M1 6h3v1h-3zM12 6h3v1h-3zM1 7h2v1h-2zM13 7h2v1h-2zM1 8h2v1h-2zM13 8h2v1h-2zM1 9h3v1h-3zM12 9h3v1h-3z"/></svg>
<div id="connlbl">连接:</div>
<div id="combo"><div id="combotext">离线</div><div id="combobtn"><svg class="px" style="left:3px;top:8px" width="7" height="4" viewBox="0 0 7 4"><path d="M0 0h7v1H0zM1 1h5v1H1zM2 2h3v1H2zM3 3h1v1H3z" fill="#000"/></svg></div></div>
<div class="sep" style="left:669px"><i></i></div>
<div id="help">?</div>
<div id="lp">
  <div id="lphead"><div id="lptitle">项目浏览器</div><svg class="px" style="left:109px;top:5px" width="8" height="11" viewBox="0 0 8 11"><path d="M1.500 6.500v-6h4v6M4.500 .5v6" fill="none" stroke="#000"/><path d="M0 6.500h8M3.500 7v4" stroke="#000"/></svg><svg style="left:129px;top:6px" width="9" height="8" viewBox="0 0 9 8"><path d="M1 .5l7 7M8 .5l-7 7" stroke="#000" stroke-width="2" fill="none"/></svg></div>
  <div id="tree"><div class="vd" style="left:12px;top:15px;height:121px"></div>
<div class="hd" style="left:18px;top:9px;width:5px"></div>
<div class="hd" style="left:18px;top:57px;width:5px"></div>
<div class="hd" style="left:18px;top:89px;width:5px"></div>
<div class="hd" style="left:18px;top:137px;width:5px"></div>
<div class="hd" style="left:14px;top:41px;width:9px"></div>
<div class="hd" style="left:33px;top:25px;width:10px"></div>
<div class="hd" style="left:33px;top:73px;width:10px"></div>
<div class="hd" style="left:33px;top:105px;width:10px"></div>
<div class="hd" style="left:33px;top:121px;width:10px"></div>
<div class="hd" style="left:33px;top:153px;width:10px"></div>
<div class="vd" style="left:31px;top:17px;height:9px"></div>
<div class="vd" style="left:31px;top:65px;height:9px"></div>
<div class="vd" style="left:31px;top:97px;height:25px"></div>
<div class="vd" style="left:31px;top:145px;height:9px"></div>
<div style="left:8px;top:5px;width:9px;height:9px"><svg class="px" width="9" height="9" viewBox="0 0 9 9"><rect x=".5" y=".5" width="8" height="8" rx="1" fill="#fafafa" stroke="#919191"/><rect x="1" y="5" width="7" height="3" fill="#e1e1e1"/><rect x="2" y="4" width="5" height="1" fill="#2f4f9f"/></svg></div>
<div style="left:23px;top:2px;width:16px;height:13px"><svg class="px" style="" width="16" height="13" viewBox="0 0 16 13"><path fill="#808080" d="M3 0h5v1h-5zM2 1h1v1h-1zM8 1h1v1h-1zM1 2h1v1h-1zM9 2h6v1h-6zM1 3h1v1h-1zM14 3h1v1h-1zM1 4h1v1h-1zM14 4h1v1h-1zM0 5h12v1h-12zM14 5h1v1h-1zM0 6h1v1h-1zM14 6h1v1h-1zM1 7h1v1h-1zM1 8h1v1h-1zM2 9h1v1h-1zM2 10h1v1h-1zM3 11h11v1h-11z"/><path fill="#ffff00" d="M3 1h1v1h-1zM5 1h1v1h-1zM7 1h1v1h-1zM2 2h1v1h-1zM4 2h1v1h-1zM6 2h1v1h-1zM8 2h1v1h-1zM3 3h1v1h-1zM5 3h1v1h-1zM7 3h1v1h-1zM9 3h1v1h-1zM11 3h1v1h-1zM13 3h1v1h-1zM2 4h1v1h-1zM4 4h1v1h-1zM6 4h1v1h-1zM8 4h1v1h-1zM10 4h1v1h-1zM12 4h1v1h-1zM13 5h1v1h-1zM2 6h1v1h-1zM4 6h1v1h-1zM6 6h1v1h-1zM8 6h1v1h-1zM10 6h1v1h-1zM12 6h1v1h-1zM2 7h1v1h-1zM4 7h1v1h-1zM6 7h1v1h-1zM8 7h1v1h-1zM10 7h1v1h-1zM12 7h1v1h-1zM3 8h1v1h-1zM5 8h1v1h-1zM7 8h1v1h-1zM9 8h1v1h-1zM11 8h1v1h-1zM13 8h1v1h-1zM3 9h1v1h-1zM5 9h1v1h-1zM7 9h1v1h-1zM9 9h1v1h-1zM11 9h1v1h-1zM13 9h1v1h-1zM4 10h1v1h-1zM6 10h1v1h-1zM8 10h1v1h-1zM10 10h1v1h-1zM12 10h1v1h-1zM14 10h1v1h-1z"/><path fill="#e4e4ea" d="M4 1h1v1h-1zM6 1h1v1h-1zM3 2h1v1h-1zM5 2h1v1h-1zM7 2h1v1h-1zM2 3h1v1h-1zM4 3h1v1h-1zM6 3h1v1h-1zM8 3h1v1h-1zM10 3h1v1h-1zM12 3h1v1h-1zM3 4h1v1h-1zM5 4h1v1h-1zM7 4h1v1h-1zM9 4h1v1h-1zM11 4h1v1h-1zM13 4h1v1h-1zM1 6h1v1h-1zM3 6h1v1h-1zM5 6h1v1h-1zM7 6h1v1h-1zM9 6h1v1h-1zM11 6h1v1h-1zM3 7h1v1h-1zM5 7h1v1h-1zM7 7h1v1h-1zM9 7h1v1h-1zM11 7h1v1h-1zM2 8h1v1h-1zM4 8h1v1h-1zM6 8h1v1h-1zM8 8h1v1h-1zM10 8h1v1h-1zM12 8h1v1h-1zM4 9h1v1h-1zM6 9h1v1h-1zM8 9h1v1h-1zM10 9h1v1h-1zM12 9h1v1h-1zM3 10h1v1h-1zM5 10h1v1h-1zM7 10h1v1h-1zM9 10h1v1h-1zM11 10h1v1h-1zM13 10h1v1h-1z"/><path fill="#000" d="M15 3h1v1h-1zM15 4h1v1h-1zM12 5h1v1h-1zM15 5h1v1h-1zM13 6h1v1h-1zM15 6h1v1h-1zM13 7h3v1h-3zM14 8h2v1h-2zM14 9h2v1h-2zM15 10h1v1h-1zM14 11h2v1h-2zM3 12h13v1h-13z"/></svg></div>
<div class="tl" style="left:44px;top:1px">程序文件</div>
<div style="left:43px;top:18px;width:14px;height:14px"><svg class="px" style="" width="14" height="14" viewBox="0 0 14 14"><path fill="#000" d="M0 0h14v1h-14zM0 1h1v1h-1zM13 1h1v1h-1zM0 2h1v1h-1zM5 2h2v1h-2zM8 2h3v1h-3zM13 2h1v1h-1zM0 3h1v1h-1zM13 3h1v1h-1zM0 4h1v1h-1zM6 4h2v1h-2zM13 4h1v1h-1zM0 5h1v1h-1zM13 5h1v1h-1zM0 6h1v1h-1zM4 6h2v1h-2zM13 6h1v1h-1zM0 7h1v1h-1zM13 7h1v1h-1zM0 8h1v1h-1zM6 8h1v1h-1zM8 8h1v1h-1zM10 8h1v1h-1zM13 8h1v1h-1zM0 9h1v1h-1zM13 9h1v1h-1zM0 10h1v1h-1zM5 10h2v1h-2zM8 10h2v1h-2zM11 10h1v1h-1zM13 10h1v1h-1zM0 11h1v1h-1zM13 11h1v1h-1zM0 12h1v1h-1zM13 12h1v1h-1zM0 13h14v1h-14z"/><path fill="#fff" d="M1 1h12v1h-12zM1 2h1v1h-1zM4 2h1v1h-1zM7 2h1v1h-1zM11 2h2v1h-2zM1 3h12v1h-12zM1 4h1v1h-1zM5 4h1v1h-1zM8 4h5v1h-5zM1 5h12v1h-12zM1 6h1v1h-1zM3 6h1v1h-1zM6 6h7v1h-7zM1 7h12v1h-12zM1 8h1v1h-1zM5 8h1v1h-1zM7 8h1v1h-1zM9 8h1v1h-1zM11 8h2v1h-2zM1 9h12v1h-12zM1 10h1v1h-1zM4 10h1v1h-1zM7 10h1v1h-1zM10 10h1v1h-1zM12 10h1v1h-1zM1 11h12v1h-12zM1 12h12v1h-12z"/><path fill="#0000ff" d="M2 2h2v1h-2zM2 4h3v1h-3zM2 6h1v1h-1zM2 8h3v1h-3zM2 10h2v1h-2z"/></svg></div>
<div class="tl" style="left:63px;top:17px"><span class="la">Main.prg</span></div>
<div style="left:23px;top:34px;width:15px;height:13px"><svg class="px" style="" width="15" height="13" viewBox="0 0 15 13"><path fill="#808080" d="M2 0h5v1h-5zM1 1h1v1h-1zM7 1h1v1h-1zM0 2h1v1h-1zM8 2h6v1h-6zM0 3h1v1h-1zM13 3h1v1h-1zM0 4h1v1h-1zM13 4h1v1h-1zM0 5h1v1h-1zM13 5h1v1h-1zM0 6h1v1h-1zM13 6h1v1h-1zM0 7h1v1h-1zM13 7h1v1h-1zM0 8h1v1h-1zM13 8h1v1h-1zM0 9h1v1h-1zM13 9h1v1h-1zM0 10h1v1h-1zM13 10h1v1h-1zM0 11h14v1h-14z"/><path fill="#ffff00" d="M2 1h1v1h-1zM4 1h1v1h-1zM6 1h1v1h-1zM2 2h1v1h-1zM4 2h1v1h-1zM6 2h1v1h-1zM2 4h1v1h-1zM4 4h1v1h-1zM6 4h1v1h-1zM8 4h1v1h-1zM10 4h1v1h-1zM12 4h1v1h-1zM3 5h1v1h-1zM5 5h1v1h-1zM7 5h1v1h-1zM9 5h1v1h-1zM11 5h1v1h-1zM2 6h1v1h-1zM4 6h1v1h-1zM6 6h1v1h-1zM8 6h1v1h-1zM10 6h1v1h-1zM12 6h1v1h-1zM3 7h1v1h-1zM5 7h1v1h-1zM7 7h1v1h-1zM9 7h1v1h-1zM11 7h1v1h-1zM2 8h1v1h-1zM4 8h1v1h-1zM6 8h1v1h-1zM8 8h1v1h-1zM10 8h1v1h-1zM12 8h1v1h-1zM3 9h1v1h-1zM5 9h1v1h-1zM7 9h1v1h-1zM9 9h1v1h-1zM11 9h1v1h-1zM2 10h1v1h-1zM4 10h1v1h-1zM6 10h1v1h-1zM8 10h1v1h-1zM10 10h1v1h-1zM12 10h1v1h-1z"/><path fill="#d0d0d8" d="M3 1h1v1h-1zM5 1h1v1h-1zM1 2h1v1h-1zM3 2h1v1h-1zM5 2h1v1h-1zM7 2h1v1h-1zM3 4h1v1h-1zM5 4h1v1h-1zM7 4h1v1h-1zM9 4h1v1h-1zM11 4h1v1h-1zM2 5h1v1h-1zM4 5h1v1h-1zM6 5h1v1h-1zM8 5h1v1h-1zM10 5h1v1h-1zM12 5h1v1h-1zM3 6h1v1h-1zM5 6h1v1h-1zM7 6h1v1h-1zM9 6h1v1h-1zM11 6h1v1h-1zM2 7h1v1h-1zM4 7h1v1h-1zM6 7h1v1h-1zM8 7h1v1h-1zM10 7h1v1h-1zM12 7h1v1h-1zM3 8h1v1h-1zM5 8h1v1h-1zM7 8h1v1h-1zM9 8h1v1h-1zM11 8h1v1h-1zM2 9h1v1h-1zM4 9h1v1h-1zM6 9h1v1h-1zM8 9h1v1h-1zM10 9h1v1h-1zM12 9h1v1h-1zM3 10h1v1h-1zM5 10h1v1h-1zM7 10h1v1h-1zM9 10h1v1h-1zM11 10h1v1h-1z"/><path fill="#fff" d="M1 3h12v1h-12zM1 4h1v1h-1zM1 5h1v1h-1zM1 6h1v1h-1zM1 7h1v1h-1zM1 8h1v1h-1zM1 9h1v1h-1zM1 10h1v1h-1z"/><path fill="#000" d="M14 3h1v1h-1zM14 4h1v1h-1zM14 5h1v1h-1zM14 6h1v1h-1zM14 7h1v1h-1zM14 8h1v1h-1zM14 9h1v1h-1zM14 10h1v1h-1zM14 11h1v1h-1zM1 12h14v1h-14z"/></svg></div>
<div class="tl" style="left:44px;top:33px">包含文件</div>
<div style="left:8px;top:53px;width:9px;height:9px"><svg class="px" width="9" height="9" viewBox="0 0 9 9"><rect x=".5" y=".5" width="8" height="8" rx="1" fill="#fafafa" stroke="#919191"/><rect x="1" y="5" width="7" height="3" fill="#e1e1e1"/><rect x="2" y="4" width="5" height="1" fill="#2f4f9f"/></svg></div>
<div style="left:23px;top:50px;width:16px;height:13px"><svg class="px" style="" width="16" height="13" viewBox="0 0 16 13"><path fill="#808080" d="M3 0h5v1h-5zM2 1h1v1h-1zM8 1h1v1h-1zM1 2h1v1h-1zM9 2h6v1h-6zM1 3h1v1h-1zM14 3h1v1h-1zM1 4h1v1h-1zM14 4h1v1h-1zM0 5h12v1h-12zM14 5h1v1h-1zM0 6h1v1h-1zM14 6h1v1h-1zM1 7h1v1h-1zM1 8h1v1h-1zM2 9h1v1h-1zM2 10h1v1h-1zM3 11h11v1h-11z"/><path fill="#ffff00" d="M3 1h1v1h-1zM5 1h1v1h-1zM7 1h1v1h-1zM2 2h1v1h-1zM4 2h1v1h-1zM6 2h1v1h-1zM8 2h1v1h-1zM3 3h1v1h-1zM5 3h1v1h-1zM7 3h1v1h-1zM9 3h1v1h-1zM11 3h1v1h-1zM13 3h1v1h-1zM2 4h1v1h-1zM4 4h1v1h-1zM6 4h1v1h-1zM8 4h1v1h-1zM10 4h1v1h-1zM12 4h1v1h-1zM13 5h1v1h-1zM2 6h1v1h-1zM4 6h1v1h-1zM6 6h1v1h-1zM8 6h1v1h-1zM10 6h1v1h-1zM12 6h1v1h-1zM2 7h1v1h-1zM4 7h1v1h-1zM6 7h1v1h-1zM8 7h1v1h-1zM10 7h1v1h-1zM12 7h1v1h-1zM3 8h1v1h-1zM5 8h1v1h-1zM7 8h1v1h-1zM9 8h1v1h-1zM11 8h1v1h-1zM13 8h1v1h-1zM3 9h1v1h-1zM5 9h1v1h-1zM7 9h1v1h-1zM9 9h1v1h-1zM11 9h1v1h-1zM13 9h1v1h-1zM4 10h1v1h-1zM6 10h1v1h-1zM8 10h1v1h-1zM10 10h1v1h-1zM12 10h1v1h-1zM14 10h1v1h-1z"/><path fill="#e4e4ea" d="M4 1h1v1h-1zM6 1h1v1h-1zM3 2h1v1h-1zM5 2h1v1h-1zM7 2h1v1h-1zM2 3h1v1h-1zM4 3h1v1h-1zM6 3h1v1h-1zM8 3h1v1h-1zM10 3h1v1h-1zM12 3h1v1h-1zM3 4h1v1h-1zM5 4h1v1h-1zM7 4h1v1h-1zM9 4h1v1h-1zM11 4h1v1h-1zM13 4h1v1h-1zM1 6h1v1h-1zM3 6h1v1h-1zM5 6h1v1h-1zM7 6h1v1h-1zM9 6h1v1h-1zM11 6h1v1h-1zM3 7h1v1h-1zM5 7h1v1h-1zM7 7h1v1h-1zM9 7h1v1h-1zM11 7h1v1h-1zM2 8h1v1h-1zM4 8h1v1h-1zM6 8h1v1h-1zM8 8h1v1h-1zM10 8h1v1h-1zM12 8h1v1h-1zM4 9h1v1h-1zM6 9h1v1h-1zM8 9h1v1h-1zM10 9h1v1h-1zM12 9h1v1h-1zM3 10h1v1h-1zM5 10h1v1h-1zM7 10h1v1h-1zM9 10h1v1h-1zM11 10h1v1h-1zM13 10h1v1h-1z"/><path fill="#000" d="M15 3h1v1h-1zM15 4h1v1h-1zM12 5h1v1h-1zM15 5h1v1h-1zM13 6h1v1h-1zM15 6h1v1h-1zM13 7h3v1h-3zM14 8h2v1h-2zM14 9h2v1h-2zM15 10h1v1h-1zM14 11h2v1h-2zM3 12h13v1h-13z"/></svg></div>
<div class="tl" style="left:44px;top:49px">机器人点</div>
<div style="left:43px;top:66px;width:14px;height:14px"><svg width="14" height="14" viewBox="0 0 14 14"><rect x=".5" y=".5" width="13" height="13" fill="#fff" stroke="#000" shape-rendering="crispEdges"/><text x="7.200" y="11.300" text-anchor="middle" font-family="Liberation Sans,sans-serif" font-weight="bold" font-size="12" fill="#00f">D</text><g fill="#f00" shape-rendering="crispEdges"><rect x="10" y="1" width="2" height="1"/><rect x="9" y="2" width="2" height="1"/><rect x="2" y="11" width="2" height="1"/><rect x="1" y="12" width="2" height="1"/><rect x="1" y="6" width="1" height="1"/><rect x="10" y="10" width="1" height="2"/></g></svg></div>
<div class="tl" style="left:63px;top:65px"><span class="la">Points.pts</span></div>
<div style="left:8px;top:85px;width:9px;height:9px"><svg class="px" width="9" height="9" viewBox="0 0 9 9"><rect x=".5" y=".5" width="8" height="8" rx="1" fill="#fafafa" stroke="#919191"/><rect x="1" y="5" width="7" height="3" fill="#e1e1e1"/><rect x="2" y="4" width="5" height="1" fill="#2f4f9f"/></svg></div>
<div style="left:23px;top:82px;width:16px;height:13px"><svg class="px" style="" width="16" height="13" viewBox="0 0 16 13"><path fill="#808080" d="M3 0h5v1h-5zM2 1h1v1h-1zM8 1h1v1h-1zM1 2h1v1h-1zM9 2h6v1h-6zM1 3h1v1h-1zM14 3h1v1h-1zM1 4h1v1h-1zM14 4h1v1h-1zM0 5h12v1h-12zM14 5h1v1h-1zM0 6h1v1h-1zM14 6h1v1h-1zM1 7h1v1h-1zM1 8h1v1h-1zM2 9h1v1h-1zM2 10h1v1h-1zM3 11h11v1h-11z"/><path fill="#ffff00" d="M3 1h1v1h-1zM5 1h1v1h-1zM7 1h1v1h-1zM2 2h1v1h-1zM4 2h1v1h-1zM6 2h1v1h-1zM8 2h1v1h-1zM3 3h1v1h-1zM5 3h1v1h-1zM7 3h1v1h-1zM9 3h1v1h-1zM11 3h1v1h-1zM13 3h1v1h-1zM2 4h1v1h-1zM4 4h1v1h-1zM6 4h1v1h-1zM8 4h1v1h-1zM10 4h1v1h-1zM12 4h1v1h-1zM13 5h1v1h-1zM2 6h1v1h-1zM4 6h1v1h-1zM6 6h1v1h-1zM8 6h1v1h-1zM10 6h1v1h-1zM12 6h1v1h-1zM2 7h1v1h-1zM4 7h1v1h-1zM6 7h1v1h-1zM8 7h1v1h-1zM10 7h1v1h-1zM12 7h1v1h-1zM3 8h1v1h-1zM5 8h1v1h-1zM7 8h1v1h-1zM9 8h1v1h-1zM11 8h1v1h-1zM13 8h1v1h-1zM3 9h1v1h-1zM5 9h1v1h-1zM7 9h1v1h-1zM9 9h1v1h-1zM11 9h1v1h-1zM13 9h1v1h-1zM4 10h1v1h-1zM6 10h1v1h-1zM8 10h1v1h-1zM10 10h1v1h-1zM12 10h1v1h-1zM14 10h1v1h-1z"/><path fill="#e4e4ea" d="M4 1h1v1h-1zM6 1h1v1h-1zM3 2h1v1h-1zM5 2h1v1h-1zM7 2h1v1h-1zM2 3h1v1h-1zM4 3h1v1h-1zM6 3h1v1h-1zM8 3h1v1h-1zM10 3h1v1h-1zM12 3h1v1h-1zM3 4h1v1h-1zM5 4h1v1h-1zM7 4h1v1h-1zM9 4h1v1h-1zM11 4h1v1h-1zM13 4h1v1h-1zM1 6h1v1h-1zM3 6h1v1h-1zM5 6h1v1h-1zM7 6h1v1h-1zM9 6h1v1h-1zM11 6h1v1h-1zM3 7h1v1h-1zM5 7h1v1h-1zM7 7h1v1h-1zM9 7h1v1h-1zM11 7h1v1h-1zM2 8h1v1h-1zM4 8h1v1h-1zM6 8h1v1h-1zM8 8h1v1h-1zM10 8h1v1h-1zM12 8h1v1h-1zM4 9h1v1h-1zM6 9h1v1h-1zM8 9h1v1h-1zM10 9h1v1h-1zM12 9h1v1h-1zM3 10h1v1h-1zM5 10h1v1h-1zM7 10h1v1h-1zM9 10h1v1h-1zM11 10h1v1h-1zM13 10h1v1h-1z"/><path fill="#000" d="M15 3h1v1h-1zM15 4h1v1h-1zM12 5h1v1h-1zM15 5h1v1h-1zM13 6h1v1h-1zM15 6h1v1h-1zM13 7h3v1h-3zM14 8h2v1h-2zM14 9h2v1h-2zM15 10h1v1h-1zM14 11h2v1h-2zM3 12h13v1h-13z"/></svg></div>
<div class="tl" style="left:44px;top:81px">标签</div>
<div style="left:43px;top:99px;width:14px;height:12px"><svg class="px" width="14" height="12" viewBox="0 0 14 12"><g fill="#000"><rect x="1" y="0" width="2" height="4"/><rect x="0" y="1" width="4" height="2"/><rect x="1" y="6" width="2" height="4"/><rect x="0" y="7" width="4" height="2"/></g><g fill="#f00"><rect x="1" y="1" width="2" height="2"/><rect x="1" y="7" width="2" height="2"/></g><rect x="4.500" y=".5" width="9" height="4" fill="#fff" stroke="#000"/><rect x="4.500" y="6.500" width="9" height="4" fill="#fff" stroke="#000"/><path d="M6 2h1M8 2h2M11 2h2M6 8h1M8 8h2M11 8h2" stroke="#000" transform="translate(0,.5)"/></svg></div>
<div class="tl" style="left:63px;top:97px"><span class="la">I/O</span>标签</div>
<div class="err" style="left:42px;top:113px">ERR</div>
<div class="tl" style="left:63px;top:113px">自定义错误列表</div>
<div style="left:8px;top:133px;width:9px;height:9px"><svg class="px" width="9" height="9" viewBox="0 0 9 9"><rect x=".5" y=".5" width="8" height="8" rx="1" fill="#fafafa" stroke="#919191"/><rect x="1" y="5" width="7" height="3" fill="#e1e1e1"/><rect x="2" y="4" width="5" height="1" fill="#2f4f9f"/></svg></div>
<div style="left:23px;top:130px;width:16px;height:13px"><svg class="px" style="" width="16" height="13" viewBox="0 0 16 13"><path fill="#808080" d="M3 0h5v1h-5zM2 1h1v1h-1zM8 1h1v1h-1zM1 2h1v1h-1zM9 2h6v1h-6zM1 3h1v1h-1zM14 3h1v1h-1zM1 4h1v1h-1zM14 4h1v1h-1zM0 5h12v1h-12zM14 5h1v1h-1zM0 6h1v1h-1zM14 6h1v1h-1zM1 7h1v1h-1zM1 8h1v1h-1zM2 9h1v1h-1zM2 10h1v1h-1zM3 11h11v1h-11z"/><path fill="#ffff00" d="M3 1h1v1h-1zM5 1h1v1h-1zM7 1h1v1h-1zM2 2h1v1h-1zM4 2h1v1h-1zM6 2h1v1h-1zM8 2h1v1h-1zM3 3h1v1h-1zM5 3h1v1h-1zM7 3h1v1h-1zM9 3h1v1h-1zM11 3h1v1h-1zM13 3h1v1h-1zM2 4h1v1h-1zM4 4h1v1h-1zM6 4h1v1h-1zM8 4h1v1h-1zM10 4h1v1h-1zM12 4h1v1h-1zM13 5h1v1h-1zM2 6h1v1h-1zM4 6h1v1h-1zM6 6h1v1h-1zM8 6h1v1h-1zM10 6h1v1h-1zM12 6h1v1h-1zM2 7h1v1h-1zM4 7h1v1h-1zM6 7h1v1h-1zM8 7h1v1h-1zM10 7h1v1h-1zM12 7h1v1h-1zM3 8h1v1h-1zM5 8h1v1h-1zM7 8h1v1h-1zM9 8h1v1h-1zM11 8h1v1h-1zM13 8h1v1h-1zM3 9h1v1h-1zM5 9h1v1h-1zM7 9h1v1h-1zM9 9h1v1h-1zM11 9h1v1h-1zM13 9h1v1h-1zM4 10h1v1h-1zM6 10h1v1h-1zM8 10h1v1h-1zM10 10h1v1h-1zM12 10h1v1h-1zM14 10h1v1h-1z"/><path fill="#e4e4ea" d="M4 1h1v1h-1zM6 1h1v1h-1zM3 2h1v1h-1zM5 2h1v1h-1zM7 2h1v1h-1zM2 3h1v1h-1zM4 3h1v1h-1zM6 3h1v1h-1zM8 3h1v1h-1zM10 3h1v1h-1zM12 3h1v1h-1zM3 4h1v1h-1zM5 4h1v1h-1zM7 4h1v1h-1zM9 4h1v1h-1zM11 4h1v1h-1zM13 4h1v1h-1zM1 6h1v1h-1zM3 6h1v1h-1zM5 6h1v1h-1zM7 6h1v1h-1zM9 6h1v1h-1zM11 6h1v1h-1zM3 7h1v1h-1zM5 7h1v1h-1zM7 7h1v1h-1zM9 7h1v1h-1zM11 7h1v1h-1zM2 8h1v1h-1zM4 8h1v1h-1zM6 8h1v1h-1zM8 8h1v1h-1zM10 8h1v1h-1zM12 8h1v1h-1zM4 9h1v1h-1zM6 9h1v1h-1zM8 9h1v1h-1zM10 9h1v1h-1zM12 9h1v1h-1zM3 10h1v1h-1zM5 10h1v1h-1zM7 10h1v1h-1zM9 10h1v1h-1zM11 10h1v1h-1zM13 10h1v1h-1z"/><path fill="#000" d="M15 3h1v1h-1zM15 4h1v1h-1zM12 5h1v1h-1zM15 5h1v1h-1zM13 6h1v1h-1zM15 6h1v1h-1zM13 7h3v1h-3zM14 8h2v1h-2zM14 9h2v1h-2zM15 10h1v1h-1zM14 11h2v1h-2zM3 12h13v1h-13z"/></svg></div>
<div class="tl" style="left:44px;top:129px">函数</div>
<div style="left:43px;top:146px;width:14px;height:14px"><svg class="px" width="14" height="14" viewBox="0 0 14 14"><rect x=".5" y=".5" width="13" height="13" fill="#fff" stroke="#000"/><path d="M2 2h2M2 10h2" stroke="#00f" transform="translate(0,.5)"/><path d="M5 2h6M4 4h5M5 6h4M4 8h3" stroke="#000" transform="translate(0,.5)"/></svg></div>
<div class="tl" style="left:63px;top:145px"><span class="la">main</span></div>
<div class="hsb" style="left:1px;top:613px;width:141px"><svg style="left:6px;top:5px" width="4" height="7" viewBox="0 0 4 7"><path d="M4 0v7L0 3.500z" fill="#3c3c3c"/></svg><svg style="right:6px;top:5px" width="4" height="7" viewBox="0 0 4 7"><path d="M0 0v7l4-3.500z" fill="#3c3c3c"/></svg><div class="thumbh" style="left:18px;top:1px;width:100px;height:15px"><svg class="px" style="left:45px;top:3px" width="9" height="8" viewBox="0 0 9 8"><rect x="0" y="0" width="9" height="8" fill="#fff" opacity=".0"/><g fill="#fff"><rect x="0" y="1" width="1" height="7"/><rect x="2" y="1" width="2" height="7"/><rect x="5" y="1" width="2" height="7"/><rect x="8" y="1" width="1" height="7"/></g><g fill="#4b4b4b"><rect x="1" y="0" width="1" height="7"/><rect x="4" y="0" width="1" height="7"/><rect x="7" y="0" width="1" height="7"/></g><g fill="#a8a8a8"><rect x="2" y="1" width="1" height="6"/><rect x="5" y="1" width="1" height="6"/><rect x="8" y="1" width="1" height="6"/></g></svg></div></div></div>
</div>
<div id="split"></div>
<div id="mdiedge"></div><div id="mdiedge2"></div>
<div id="mdi">
  <div id="w2" class="win">
    <div class="tgrad"></div><div class="hl"></div>
    <div class="cb" style="left:266px;top:9px"><i></i><svg style="left:9px;top:7px" width="11" height="5" viewBox="0 0 11 5"><rect x=".5" y=".5" width="10" height="4" rx="1" fill="#fff" stroke="#5a6378"/></svg></div>
    <div class="cb" style="left:299px;top:9px"><i></i><svg style="left:9px;top:3px" width="11" height="9" viewBox="0 0 11 9"><rect x=".5" y=".5" width="10" height="8" rx="1" fill="#fff" stroke="#5a6378"/><rect x="3.5" y="3.5" width="4" height="2" fill="#c9d7e8" stroke="#5a6378"/></svg></div>
    <div class="cb" style="left:332px;top:9px"><i></i><svg style="left:9px;top:3px" width="11" height="9" viewBox="0 0 11 9"><path d="M.5 .5h3.600l1.400 1.700 1.400-1.700h3.600l-3.300 4 3.300 4h-3.600l-1.400-1.700-1.400 1.700h-3.600l3.300-4z" fill="#fff" stroke="#5a6378" stroke-width="1" stroke-linejoin="round"/></svg></div>
    <div class="client">
      <div class="vsb" style="left:341px;top:0;height:547px"><svg style="left:6px;top:7px" width="7" height="4" viewBox="0 0 7 4"><path d="M0 4L3.500 0 7 4z" fill="#8a8a8a"/></svg><svg style="left:6px;bottom:6px" width="7" height="4" viewBox="0 0 7 4"><path d="M0 0h7L3.500 4z" fill="#8a8a8a"/></svg></div>
      <div class="hsb" style="left:0;top:547px;width:341px"><svg style="left:6px;top:5px" width="4" height="7" viewBox="0 0 4 7"><path d="M4 0v7L0 3.500z" fill="#8a8a8a"/></svg><svg style="right:6px;top:5px" width="4" height="7" viewBox="0 0 4 7"><path d="M0 0v7l4-3.500z" fill="#8a8a8a"/></svg></div>
      <div class="sbc" style="left:341px;top:547px"><svg class="px" style="left:5px;top:6px" width="10" height="10" viewBox="0 0 10 10"><g fill="#b8b8b8"><rect x="7" y="1" width="1" height="1"/><rect x="4" y="4" width="1" height="1"/><rect x="7" y="4" width="1" height="1"/><rect x="1" y="7" width="1" height="1"/><rect x="4" y="7" width="1" height="1"/><rect x="7" y="7" width="1" height="1"/></g><g fill="#fff"><rect x="8" y="2" width="1" height="1"/><rect x="5" y="5" width="1" height="1"/><rect x="8" y="5" width="1" height="1"/><rect x="2" y="8" width="1" height="1"/><rect x="5" y="8" width="1" height="1"/><rect x="8" y="8" width="1" height="1"/></g></svg></div>
    </div>
  </div>
  <div id="w1" class="win">
    <div class="tgrad"></div><div class="hl"></div>
    <svg class="px" style="left:10px;top:10px" width="14" height="14" viewBox="0 0 14 14"><path fill="#000" d="M0 0h14v1h-14zM0 1h1v1h-1zM13 1h1v1h-1zM0 2h1v1h-1zM5 2h2v1h-2zM8 2h3v1h-3zM13 2h1v1h-1zM0 3h1v1h-1zM13 3h1v1h-1zM0 4h1v1h-1zM6 4h2v1h-2zM13 4h1v1h-1zM0 5h1v1h-1zM13 5h1v1h-1zM0 6h1v1h-1zM4 6h2v1h-2zM13 6h1v1h-1zM0 7h1v1h-1zM13 7h1v1h-1zM0 8h1v1h-1zM6 8h1v1h-1zM8 8h1v1h-1zM10 8h1v1h-1zM13 8h1v1h-1zM0 9h1v1h-1zM13 9h1v1h-1zM0 10h1v1h-1zM5 10h2v1h-2zM8 10h2v1h-2zM11 10h1v1h-1zM13 10h1v1h-1zM0 11h1v1h-1zM13 11h1v1h-1zM0 12h1v1h-1zM13 12h1v1h-1zM0 13h14v1h-14z"/><path fill="#fff" d="M1 1h12v1h-12zM1 2h1v1h-1zM4 2h1v1h-1zM7 2h1v1h-1zM11 2h2v1h-2zM1 3h12v1h-12zM1 4h1v1h-1zM5 4h1v1h-1zM8 4h5v1h-5zM1 5h12v1h-12zM1 6h1v1h-1zM3 6h1v1h-1zM6 6h7v1h-7zM1 7h12v1h-12zM1 8h1v1h-1zM5 8h1v1h-1zM7 8h1v1h-1zM9 8h1v1h-1zM11 8h2v1h-2zM1 9h12v1h-12zM1 10h1v1h-1zM4 10h1v1h-1zM7 10h1v1h-1zM10 10h1v1h-1zM12 10h1v1h-1zM1 11h12v1h-12zM1 12h12v1h-12z"/><path fill="#0000ff" d="M2 2h2v1h-2zM2 4h3v1h-3zM2 6h1v1h-1zM2 8h3v1h-3zM2 10h2v1h-2z"/></svg>
    <div class="wtitle">Main.prg</div>
    <div class="cb" style="left:492px;top:9px"><i></i><svg style="left:9px;top:7px" width="11" height="5" viewBox="0 0 11 5"><rect x=".5" y=".5" width="10" height="4" rx="1" fill="#fff" stroke="#44506a"/></svg></div>
    <div class="cb" style="left:525px;top:9px"><i></i><svg style="left:9px;top:3px" width="11" height="9" viewBox="0 0 11 9"><rect x=".5" y=".5" width="10" height="8" rx="1" fill="#fff" stroke="#44506a"/><rect x="3.5" y="3.5" width="4" height="2" fill="#a9c1de" stroke="#44506a"/></svg></div>
    <div class="cb close" style="left:558px;top:9px"><i></i><svg style="left:9px;top:3px" width="11" height="9" viewBox="0 0 11 9"><path d="M.5 .5h3.600l1.400 1.700 1.400-1.700h3.600l-3.300 4 3.300 4h-3.600l-1.400-1.700-1.400 1.700h-3.600l3.300-4z" fill="#fff" stroke="#4a2c2c" stroke-width="1" stroke-linejoin="round"/></svg></div>
    <div class="client">
      <div id="margin"></div><div id="mline"></div>
      <div id="codearea"><pre id="code"><b class="c">'</b>
<b class="c">' Pick and Place 1 to Pallet</b>
<b class="c">'</b>
<b class="c">' This program picks a part from one position and places it in a pallet</b>
<b class="c">'</b>
<b class="c">' Setup:</b>
<b class="c">' 1. Edit the values for PALLET_ROWS and PALLET_COLS</b>
<b class="c">' 2. Teach pick position</b>
<b class="c">' 3. Teach three corners of the pallet: pallet1, pallet2, pallet3</b>
<b class="c">'</b>
<b class="k">#define</b> PALLET_ROWS 10
<b class="k">#define</b> PALLET_COLS 10

<b class="k">Function</b> main

    <b class="k">Integer</b> i
    <b class="k">Integer</b> numOfPalletLocs
    <b class="k">Long</b> cycleCount

    InitRobot

    <b class="c">' Define the robot pallet to place the parts in</b>
    <b class="k">Pallet</b> 1, pallet1, pallet2, pallet3, PALLET_COLS, PALLET_ROWS

    numOfPalletLocs = PALLET_ROWS * PALLET_COLS
    <b class="k">Do</b>
        <b class="c">' Wait for pallet ready</b>
        <b class="k">Wait</b> <b class="k">Sw</b>(PalletInPos) = <b class="k">On</b>
        <b class="k">Off</b> PalletDone</pre></div>
      <div class="vsb" style="left:567px;top:0;height:469px;background:linear-gradient(90deg,#fff 0,#fff 1px,#ededed 1px,#f0f0f0 4px,#f1f1f1 100%)"><svg style="left:6px;top:7px" width="7" height="4" viewBox="0 0 7 4"><path d="M0 4L3.500 0 7 4z" fill="#3c3c3c"/></svg><svg style="left:6px;bottom:6px" width="7" height="4" viewBox="0 0 7 4"><path d="M0 0h7L3.500 4z" fill="#3c3c3c"/></svg><div class="thumbv" style="left:1px;top:18px;width:15px;height:194px"><svg class="px" style="left:2px;top:91px" width="9" height="9" viewBox="0 0 9 9"><g fill="#fff"><rect x="0" y="0" width="9" height="1"/><rect x="0" y="3" width="9" height="1"/><rect x="0" y="6" width="9" height="1"/><rect x="0" y="1" width="1" height="8"/><rect x="8" y="1" width="1" height="8"/></g><g fill="#4b4b4b"><rect x="1" y="1" width="7" height="1"/><rect x="1" y="4" width="7" height="1"/><rect x="1" y="7" width="7" height="1"/></g><g fill="#a8a8a8"><rect x="2" y="2" width="6" height="1"/><rect x="2" y="5" width="6" height="1"/><rect x="2" y="8" width="6" height="1"/></g></svg></div></div>
      <div class="hsb" style="left:0;top:469px;width:567px"><svg style="left:6px;top:5px" width="4" height="7" viewBox="0 0 4 7"><path d="M4 0v7L0 3.500z" fill="#3c3c3c"/></svg><svg style="right:6px;top:5px" width="4" height="7" viewBox="0 0 4 7"><path d="M0 0v7l4-3.500z" fill="#3c3c3c"/></svg><div class="thumbh" style="left:18px;top:1px;width:496px;height:15px"><svg class="px" style="left:244px;top:3px" width="9" height="8" viewBox="0 0 9 8"><rect x="0" y="0" width="9" height="8" fill="#fff" opacity=".0"/><g fill="#fff"><rect x="0" y="1" width="1" height="7"/><rect x="2" y="1" width="2" height="7"/><rect x="5" y="1" width="2" height="7"/><rect x="8" y="1" width="1" height="7"/></g><g fill="#4b4b4b"><rect x="1" y="0" width="1" height="7"/><rect x="4" y="0" width="1" height="7"/><rect x="7" y="0" width="1" height="7"/></g><g fill="#a8a8a8"><rect x="2" y="1" width="1" height="6"/><rect x="5" y="1" width="1" height="6"/><rect x="8" y="1" width="1" height="6"/></g></svg></div></div>
      <div class="sbc" style="left:567px;top:469px"><svg class="px" style="left:5px;top:6px" width="10" height="10" viewBox="0 0 10 10"><g fill="#b8b8b8"><rect x="7" y="1" width="1" height="1"/><rect x="4" y="4" width="1" height="1"/><rect x="7" y="4" width="1" height="1"/><rect x="1" y="7" width="1" height="1"/><rect x="4" y="7" width="1" height="1"/><rect x="7" y="7" width="1" height="1"/></g><g fill="#fff"><rect x="8" y="2" width="1" height="1"/><rect x="5" y="5" width="1" height="1"/><rect x="8" y="5" width="1" height="1"/><rect x="2" y="8" width="1" height="1"/><rect x="5" y="8" width="1" height="1"/><rect x="8" y="8" width="1" height="1"/></g></svg></div>
    </div>
  </div>
</div>
<div id="status">
<div class="ssep" style="left:710px"><i></i></div><div class="st dis" style="left:716px">模式</div>
<div class="ssep" style="left:743px"><i></i></div><div class="st dis" style="left:750px"><span class="la">EStop</span></div>
<div class="ssep" style="left:782px"><i></i></div><div class="st dis" style="left:787px">安全</div>
<div class="ssep" style="left:815px"><i></i></div><div class="st dis" style="left:820px">错误</div>
<div class="ssep" style="left:848px"><i></i></div><div class="st dis" style="left:853px">警告</div>
<div class="ssep" style="left:881px"><i></i></div><div class="st dis" style="left:888px">运行任务</div>
<div class="ssep" style="left:939px"><i></i></div><div class="st" style="left:950px">行<span class="la">11, Col 23</span></div>
<div class="ssep" style="left:1031px"><i></i></div><div class="st" style="left:1045px"><span class="la">INS</span></div>
<div class="ssep" style="left:1073px"><i></i></div>
<svg class="px" style="left:1078px;top:10px" width="12" height="12" viewBox="0 0 12 12"><g fill="#b8b8b8"><rect x="9" y="1" width="2" height="2"/><rect x="5" y="5" width="2" height="2"/><rect x="9" y="5" width="2" height="2"/><rect x="1" y="9" width="2" height="2"/><rect x="5" y="9" width="2" height="2"/><rect x="9" y="9" width="2" height="2"/></g></svg>
</div>

</body></html>
